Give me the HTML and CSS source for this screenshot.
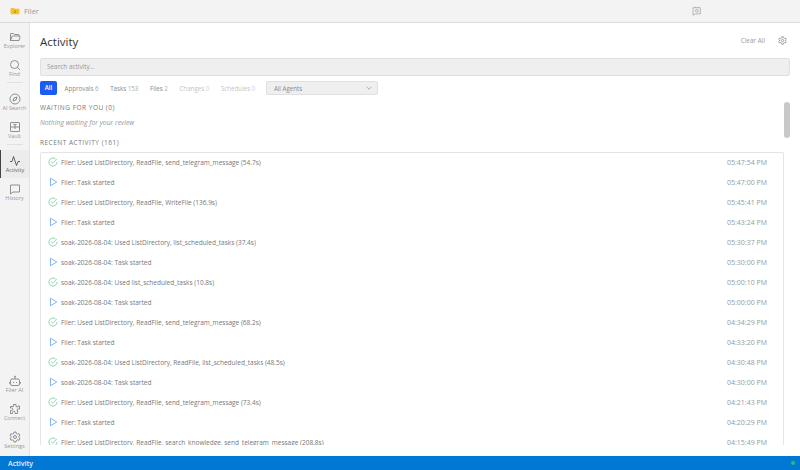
FILE: index.html
```html
<!DOCTYPE html>
<html>
<head>
    <title>Activity</title>
    <meta name="viewport" content="width=device-width, initial-scale=1">
    <link rel="stylesheet" href="styles.css">
</head>
<body>
    <header class="titlebar">
        <div class="app">
            <svg class="logo" viewBox="0 0 16 16"><path d="M1 3h5l1.500 1.500H15V13H1z" fill="#f6c026"/><path d="M7 7l2 2-2 2" fill="none" stroke="#8a6200" stroke-width="1.400"/></svg>
            <span>Filer</span>
        </div>
        <svg class="chat-icon" viewBox="0 0 16 16"><path d="M3 2.500h10.500v9H6l-3 2z M6 1v1.500 M10 1v1.500" fill="none" stroke="#9a9a9a"/><circle cx="8.500" cy="7" r="2" fill="none" stroke="#9a9a9a"/></svg>
    </header>
    <div class="shell">
        <nav class="sidebar">
            <a class="nav-item">
                <svg viewBox="0 0 24 24"><path d="M3 19V6a1 1 0 0 1 1-1h5l2 2h8a1 1 0 0 1 1 1v2M3 19l3-8.500a1 1 0 0 1 1-.5h14a1 1 0 0 1 1 1.300L20 19z"/></svg>
                <span>Explorer</span>
            </a>
            <a class="nav-item">
                <svg viewBox="0 0 24 24"><circle cx="11" cy="11" r="8"/><path d="M17 17l5 5"/></svg>
                <span>Find</span>
            </a>
            <div class="nav-sep"></div>
            <a class="nav-item">
                <svg viewBox="0 0 24 24"><circle cx="12" cy="12" r="10"/><path d="M16 8l-2 6-6 2 2-6z"/></svg>
                <span>AI Search</span>
            </a>
            <a class="nav-item">
                <svg viewBox="0 0 24 24"><rect x="3" y="3" width="18" height="18" rx="1"/><path d="M3 12h18M12 8v8M9 7h6"/></svg>
                <span>Vault</span>
            </a>
            <div class="nav-sep"></div>
            <a class="nav-item active">
                <svg viewBox="0 0 24 24"><path d="M2 13h4l3-10 6 18 3-8h4"/></svg>
                <span>Activity</span>
            </a>
            <a class="nav-item">
                <svg viewBox="0 0 24 24"><path d="M3 4h18v14H8l-5 4z"/></svg>
                <span>History</span>
            </a>
            <div class="nav-spacer"></div>
            <a class="nav-item">
                <svg viewBox="0 0 24 24"><rect x="3" y="8" width="18" height="13" rx="3"/><path d="M12 8V4M9 14v2M15 14v2M1 14v3M23 14v3"/><circle cx="12" cy="3" r="1"/></svg>
                <span>Filer AI</span>
            </a>
            <a class="nav-item">
                <svg viewBox="0 0 24 24"><path d="M9 3h5v3a2 2 0 0 0 4 0h3v6h-3a2 2 0 0 0 0 4h-1v5h-5v-2a2.500 2.500 0 0 0-5 0v2H3v-6h2a2.500 2.500 0 0 0 0-5H3V7h6z"/></svg>
                <span>Connect</span>
            </a>
            <a class="nav-item">
                <svg viewBox="0 0 24 24"><circle cx="12" cy="12" r="3"/><path d="M10 2h4l.6 3 2.500 1.400 2.900-1 2 3.500-2.300 2v2.200l2.300 2-2 3.500-2.900-1-2.500 1.400-.6 3h-4l-.6-3-2.500-1.400-2.900 1-2-3.500 2.300-2v-2.200l-2.300-2 2-3.500 2.900 1L9.400 5z"/></svg>
                <span>Settings</span>
            </a>
        </nav>
        <main class="content">
            <div class="page-head">
                <h1>Activity</h1>
                <div class="head-actions">
                    <span class="clear">Clear All</span>
                    <svg class="gear" viewBox="0 0 24 24"><circle cx="12" cy="12" r="3"/><path d="M10 2h4l.6 3 2.500 1.400 2.900-1 2 3.500-2.300 2v2.200l2.300 2-2 3.500-2.900-1-2.500 1.400-.6 3h-4l-.6-3-2.500-1.400-2.900 1-2-3.500 2.300-2v-2.200l-2.300-2 2-3.500 2.900 1L9.400 5z"/></svg>
                </div>
            </div>
            <div class="search">Search activity...</div>
            <div class="filters">
                <span class="tab selected">All</span>
                <span class="tab">Approvals <em>6</em></span>
                <span class="tab">Tasks <em>153</em></span>
                <span class="tab">Files <em>2</em></span>
                <span class="tab dim">Changes <em>0</em></span>
                <span class="tab dim">Schedules <em>0</em></span>
                <div class="agents">
                    <span>All Agents</span>
                    <svg viewBox="0 0 10 6"><path d="M1 1l4 4 4-4" fill="none" stroke="#888"/></svg>
                </div>
            </div>
            <h2>WAITING FOR YOU (0)</h2>
            <p class="empty">Nothing waiting for your review</p>
            <h2 class="recent">RECENT ACTIVITY (161)</h2>
            <div class="list" id="list"></div>
            <div class="thumb"></div>
        </main>
    </div>
    <footer class="statusbar">
        <span>Activity</span>
        <i class="dot"></i>
    </footer>
    <script>
        const rows = [
            ["done", "Filer: Used ListDirectory, ReadFile, send_telegram_message (54.7s)", "05:47:54 PM"],
            ["start", "Filer: Task started", "05:47:00 PM"],
            ["done", "Filer: Used ListDirectory, ReadFile, WriteFile (136.9s)", "05:45:41 PM"],
            ["start", "Filer: Task started", "05:43:24 PM"],
            ["done", "soak-2026-08-04: Used ListDirectory, list_scheduled_tasks (37.4s)", "05:30:37 PM"],
            ["start", "soak-2026-08-04: Task started", "05:30:00 PM"],
            ["done", "soak-2026-08-04: Used list_scheduled_tasks (10.8s)", "05:00:10 PM"],
            ["start", "soak-2026-08-04: Task started", "05:00:00 PM"],
            ["done", "Filer: Used ListDirectory, ReadFile, send_telegram_message (68.2s)", "04:34:29 PM"],
            ["start", "Filer: Task started", "04:33:20 PM"],
            ["done", "soak-2026-08-04: Used ListDirectory, ReadFile, list_scheduled_tasks (48.5s)", "04:30:48 PM"],
            ["start", "soak-2026-08-04: Task started", "04:30:00 PM"],
            ["done", "Filer: Used ListDirectory, ReadFile, send_telegram_message (73.4s)", "04:21:43 PM"],
            ["start", "Filer: Task started", "04:20:29 PM"],
            ["done", "Filer: Used ListDirectory, ReadFile, search_knowledge, send_telegram_message (208.8s)", "04:15:49 PM"]
        ];
        const icons = {
            done: '<svg class="icon" viewBox="0 0 16 16"><path d="M14.500 8a6.500 6.500 0 1 1-2.400-5" fill="none" stroke="#6fd09a" stroke-width="1.300"/><path d="M5 7.500l2.500 2.500 6.500-6.500" fill="none" stroke="#6fd09a" stroke-width="1.300"/></svg>',
            start: '<svg class="icon" viewBox="0 0 16 16"><path d="M4 2l10 6-10 6z" fill="none" stroke="#6ea4f2" stroke-width="1.300" stroke-linejoin="round"/></svg>'
        };
        document.getElementById("list").innerHTML = rows.map(row =>
            '<div class="row">' + icons[row[0]] + '<span class="msg">' + row[1] + '</span><span class="time">' + row[2] + '</span></div>'
        ).join("");
    </script>
</body>
</html>
```

FILE: styles.css
```css
html, body {
    height: 100%;
}

body {
    margin: 0;
    display: flex;
    flex-direction: column;
    overflow: hidden;
    background-color: #fff;
    color: #666;
    font-family: "Open Sans", "Noto Sans", sans-serif;
    font-size: 6.400px;
}

.titlebar {
    flex: 0 0 23px;
    box-sizing: border-box;
    display: flex;
    align-items: center;
    background-color: #f3f3f3;
    border-bottom: 1px solid #dcdcdc;
}

.app {
    display: flex;
    align-items: center;
    gap: 4px;
    margin-left: 10px;
    color: #999;
    font-size: 7.500px;
}

.logo {
    width: 10px;
    height: 10px;
}

.chat-icon {
    width: 11px;
    height: 11px;
    margin-left: 652px;
}

.shell {
    flex: 1;
    display: flex;
    min-height: 0;
}

.sidebar {
    flex: 0 0 30px;
    display: flex;
    flex-direction: column;
    align-items: center;
    padding: 3px 0 2px;
    box-sizing: border-box;
    background-color: #f3f3f3;
    border-right: 1px solid #e2e2e2;
}

.nav-item {
    width: 100%;
    height: 28px;
    flex: 0 0 28px;
    box-sizing: border-box;
    display: flex;
    flex-direction: column;
    align-items: center;
    justify-content: center;
    color: #9a9a9a;
    font-size: 5.500px;
    line-height: 7px;
    white-space: nowrap;
}

.nav-item svg {
    width: 12px;
    height: 12px;
    fill: none;
    stroke: #707070;
    stroke-width: 1.500;
}

.nav-item.active {
    border-left: 1px solid #444;
    background-color: #ececec;
    color: #666;
}

.nav-item.active svg {
    stroke: #333;
}

.nav-sep {
    width: 16px;
    flex: 0 0 1px;
    margin: 0 0 5px;
    background-color: #e0e0e0;
}

.nav-spacer {
    flex: 1;
}

.content {
    flex: 1;
    position: relative;
    min-width: 0;
    display: flex;
    flex-direction: column;
    overflow: hidden;
    padding: 0 10px 11px;
}

.page-head {
    flex: 0 0 35px;
    display: flex;
    align-items: center;
    justify-content: space-between;
    padding-top: 2px;
    box-sizing: border-box;
}

h1 {
    margin: 0;
    color: #333;
    font-size: 11.500px;
    font-weight: 400;
}

.head-actions {
    display: flex;
    align-items: center;
    gap: 13px;
    margin: -2px 3px 0 0;
}

.clear {
    color: #999;
}

.gear {
    width: 9px;
    height: 9px;
    fill: none;
    stroke: #777;
    stroke-width: 1.800;
}

.search {
    flex: 0 0 18px;
    line-height: 16px;
    padding-left: 6px;
    background-color: #efefef;
    border: 1px solid #e0e0e0;
    border-radius: 2px;
    box-sizing: border-box;
    color: #999;
}

.filters {
    flex: 0 0 14px;
    display: flex;
    align-items: center;
    gap: 11.600px;
    margin-top: 5px;
    color: #8a8a8a;
    font-size: 6.200px;
}

.tab em {
    font-style: normal;
    color: #aaa;
}

.tab.selected {
    width: 17px;
    height: 14px;
    line-height: 14px;
    margin-right: -4px;
    text-align: center;
    background-color: #1a5cf5;
    border-radius: 2px;
    color: #fff;
    font-weight: 600;
}

.tab.dim {
    color: #c4c4c4;
}

.tab.dim em {
    color: #d0d0d0;
}

.agents {
    width: 112px;
    height: 14px;
    margin-left: -1px;
    display: flex;
    align-items: center;
    justify-content: space-between;
    padding: 0 5px 0 7px;
    box-sizing: border-box;
    background-color: #efefef;
    border: 1px solid #e0e0e0;
    border-radius: 2px;
}

.agents svg {
    width: 6px;
    height: 4px;
}

h2 {
    flex: 0 0 12px;
    margin: 7px 0 0;
    line-height: 12px;
    color: #777;
    font-size: 6.500px;
    font-weight: 400;
    letter-spacing: .5px;
}

.empty {
    flex: 0 0 10px;
    margin: 4px 0 0;
    line-height: 10px;
    color: #999;
    font-size: 6.800px;
    font-style: italic;
}

h2.recent {
    margin-top: 9px;
}

.list {
    flex: 1;
    min-height: 0;
    overflow: hidden;
    margin: 3px 6px 0 0;
    border: 1px solid #e4e4e4;
    border-bottom: 0;
    border-radius: 2px 2px 0 0;
}

.row {
    height: 20px;
    box-sizing: border-box;
    display: flex;
    align-items: center;
    padding: 0 6px 2px 7px;
}

.icon {
    flex: 0 0 10px;
    width: 10px;
    height: 10px;
    margin-right: 3px;
}

.msg {
    flex: 1;
    color: #777;
    font-size: 6.500px;
}

.time {
    width: 50px;
    color: #999;
    font-size: 7px;
}

.thumb {
    position: absolute;
    top: 79px;
    right: 10px;
    width: 6px;
    height: 36px;
    border-radius: 3px;
    background-color: #c8c8c8;
}

.statusbar {
    flex: 0 0 14px;
    display: flex;
    align-items: center;
    justify-content: space-between;
    padding: 0 5px 0 8px;
    background-color: #0078d4;
    color: #e8f2fb;
    font-size: 7px;
    font-weight: 600;
}

.dot {
    width: 4px;
    height: 4px;
    border-radius: 50%;
    background-color: #1fc46a;
}
```
